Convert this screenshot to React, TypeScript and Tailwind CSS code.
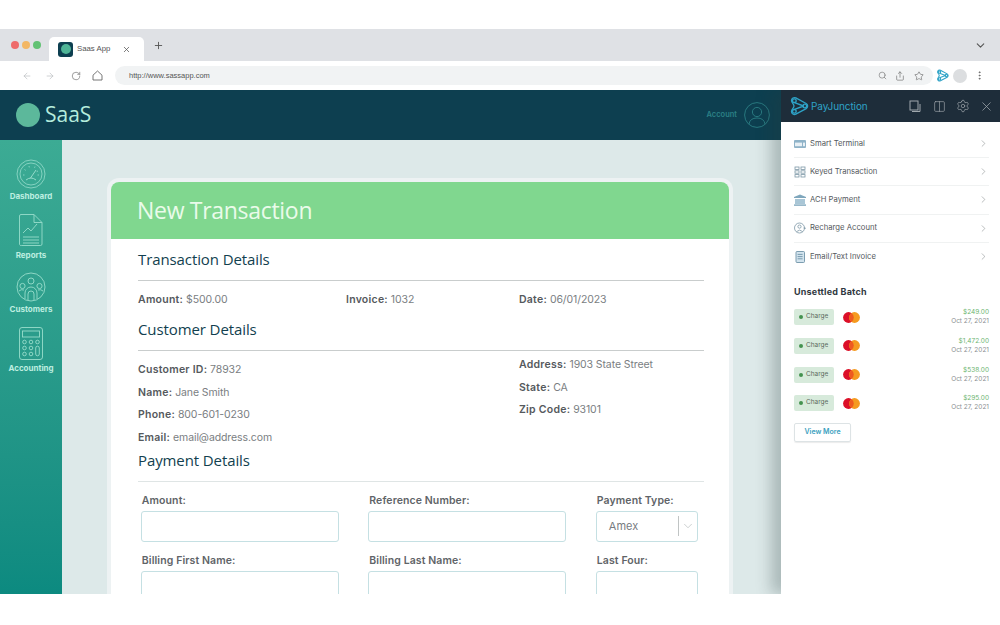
import { ArrowLeft, ArrowRight, RotateCw, Search, Share, Star, EllipsisVertical, ChevronDown, ChevronRight, Plus, X, Settings, Columns2 } from "lucide-react";

function PjLogo({ size = 20, color = "#2ea3c7", sw = 2 }: { size?: number; color?: string; sw?: number }) {
  return (
    <svg width={size} height={size} viewBox="0 0 24 24" fill="none" stroke={color} strokeWidth={sw} strokeLinejoin="round">
      <path d="M3 5.5a3.6 3.6 0 0 1 5.2-3.2L20.6 9a3.6 3.6 0 0 1 0 6.2L8.2 21.8A3.6 3.6 0 0 1 3 18.5c0-2.4 3-4.2 3-6.5S3 7.9 3 5.5z" />
      <path d="M6.6 8 L17.5 12 L6.6 16" />
      <circle cx="6.4" cy="5.6" r="2.2" />
      <circle cx="6.4" cy="18.4" r="2.2" />
      <circle cx="19" cy="12" r="2.2" />
    </svg>
  );
}

function Mastercard() {
  return (
    <svg width="17" height="11" viewBox="0 0 17 11" className="shrink-0">
      <circle cx="5.5" cy="5.5" r="5.4" fill="#dc0f28" />
      <circle cx="11.5" cy="5.5" r="5.4" fill="#f59a1f" />
      <path d="M8.5 1.1 A5.4 5.4 0 0 1 8.5 9.9 A5.4 5.4 0 0 1 8.5 1.1" fill="#ee5a1f" />
    </svg>
  );
}

const navIconClass = "text-[#97dccb]";

function DashboardIcon() {
  return (
    <svg width="30" height="30" viewBox="0 0 30 30" fill="none" stroke="currentColor" strokeWidth="0.8" className={navIconClass}>
      <circle cx="15" cy="15" r="14" />
      <circle cx="15" cy="15" r="11" />
      <path d="M14.5 19 L20 11 M10 21 Q15 17 20 21" strokeWidth="1" />
      <path d="M7 16h1.5M8.5 10.5l1.2.8M13 7l.3 1.4M19 7.5l-.5 1.3M22 12l-1.3.6M23 16h-1.5" />
    </svg>
  );
}

function ReportsIcon() {
  return (
    <svg width="24" height="32" viewBox="0 0 24 32" fill="none" stroke="currentColor" strokeWidth="0.9" className={navIconClass}>
      <path d="M2 .5h13l8 8V30a1.5 1.5 0 0 1-1.5 1.5h-19A1.5 1.5 0 0 1 .5 30V2A1.5 1.5 0 0 1 2 .5z" />
      <path d="M15 .5V8.5h8" />
      <path d="M4 19l5-5 3 3 6-7M4 23h16M4 26h16M4 29h16" />
    </svg>
  );
}

function CustomersIcon() {
  return (
    <svg width="30" height="30" viewBox="0 0 30 30" fill="none" stroke="currentColor" strokeWidth="0.9" className={navIconClass}>
      <circle cx="15" cy="15" r="14" />
      <circle cx="15" cy="9" r="3" />
      <circle cx="6.5" cy="14" r="2.6" />
      <circle cx="23.5" cy="14" r="2.6" />
      <path d="M9 27v-6a6 6 0 0 1 12 0v6M12 28v-6a3 3 0 0 1 6 0v6M3 19q2-2 5-1M27 19q-2-2-5-1" />
    </svg>
  );
}

function AccountingIcon() {
  return (
    <svg width="24" height="33" viewBox="0 0 24 33" fill="none" stroke="currentColor" strokeWidth="0.9" className={navIconClass}>
      <rect x=".5" y=".5" width="23" height="32" rx="2.5" />
      <rect x="3.5" y="4" width="17" height="6" />
      <circle cx="5.5" cy="15" r="1.8" /><circle cx="12" cy="15" r="1.8" /><circle cx="18.5" cy="15" r="1.8" />
      <circle cx="5.5" cy="21" r="1.8" /><circle cx="12" cy="21" r="1.8" />
      <circle cx="5.5" cy="27" r="1.8" /><circle cx="12" cy="27" r="1.8" />
      <rect x="16.7" y="19.2" width="3.6" height="9.6" rx="1.8" />
    </svg>
  );
}

function NavItem({ icon, label, gap, pad }: { icon: React.ReactNode; label: string; gap: string; pad: string }) {
  return (
    <div className={`flex flex-col items-center ${pad}`}>
      {icon}
      <span className={`${gap} text-[8px] leading-[10px] font-bold text-[#bdeee0] font-['Inter',sans-serif]`}>{label}</span>
    </div>
  );
}

function Field({ label, children }: { label: string; children?: React.ReactNode }) {
  return (
    <div className="w-full flex flex-col">
      <span className="pl-[1px] text-[10.5px] leading-[13px] font-semibold tracking-[0.1px] text-[#5f6468]">{label}</span>
      <div className="mt-[4px] h-[31px] rounded-[3px] border border-[#c5e0e3] bg-white flex items-center shrink-0">{children}</div>
    </div>
  );
}

function Info({ k, v }: { k: string; v: string }) {
  return (
    <div className="text-[10.5px] leading-[14px] tracking-[-0.1px] text-[#7a7e82]">
      <span className="font-semibold tracking-[0.25px] text-[#55595d]">{k}</span> {v}
    </div>
  );
}

function Section({ title }: { title: string }) {
  return (
    <h2 className="text-[15px] leading-[22px] tracking-[-0.1px] text-[#123f4f] font-['Open_Sans',sans-serif]">{title}</h2>
  );
}

const menu = [
  {
    label: "Smart Terminal",
    icon: (
      <svg width="12" height="12" viewBox="0 0 12 12"><rect y="2" width="12" height="8" rx="1" fill="#8fb3c8" /><rect x="1" y="4.6" width="7" height="3.6" fill="#e8f0f5" /><rect x="9" y="4.6" width="2" height="3.6" fill="#e8f0f5" /></svg>
    ),
  },
  {
    label: "Keyed Transaction",
    icon: (
      <svg width="12" height="12" viewBox="0 0 12 12" fill="none" stroke="#7c97a6" strokeWidth="0.8"><rect x="1" y="1" width="4" height="2.4" /><rect x="1" y="4.8" width="4" height="2.4" /><rect x="1" y="8.6" width="4" height="2.4" /><rect x="7" y="1" width="4" height="2.4" /><rect x="7" y="4.8" width="4" height="2.4" /><rect x="7" y="8.6" width="4" height="2.4" /></svg>
    ),
  },
  {
    label: "ACH Payment",
    icon: (
      <svg width="12" height="12" viewBox="0 0 12 12"><path d="M6 .5 12 3v1H0V3z" fill="#7fa7bd" /><rect x="1" y="5" width="10" height="5" fill="#a9c6d6" /><rect y="10.4" width="12" height="1.4" fill="#7fa7bd" /></svg>
    ),
  },
  {
    label: "Recharge Account",
    icon: (
      <svg width="12" height="12" viewBox="0 0 12 12" fill="none" stroke="#7c97a6" strokeWidth="0.8"><circle cx="5.5" cy="6" r="5" /><circle cx="5.5" cy="4.6" r="1.6" /><path d="M2.6 9.6q3-3 6 0M9.5 6l2 0-1 1" /></svg>
    ),
  },
  {
    label: "Email/Text Invoice",
    icon: (
      <svg width="12" height="12" viewBox="0 0 12 12" fill="none" stroke="#6f93a8" strokeWidth="0.9"><rect x="2" y=".5" width="8.5" height="11" rx="1" fill="#d3e4ee" /><path d="M3.6 3.4h5M3.6 5.6h5M3.6 7.8h5" /></svg>
    ),
  },
];

const batch = ["$249.00", "$1,472.00", "$538.00", "$295.00"];

export default function App() {
  return (
    <div className="w-[1000px] h-[625px] bg-white overflow-hidden flex flex-col font-['Inter','Liberation_Sans',sans-serif]">
      <div className="h-[29px] shrink-0" />

      {/* Tab strip */}
      <div className="h-[32px] shrink-0 bg-[#dfe1e5] flex items-end pl-[11px] pr-[13px]">
        <div className="h-[32px] w-[38px] flex items-center gap-[3px]">
          <span className="w-[8px] h-[8px] rounded-full bg-[#ee6b6b]" />
          <span className="w-[8px] h-[8px] rounded-full bg-[#f3b765]" />
          <span className="w-[8px] h-[8px] rounded-full bg-[#62c274]" />
        </div>
        <div className="w-[95px] h-[24px] bg-white rounded-t-[5px] flex items-center pl-[9px] pr-[13px]">
          <div className="w-[15px] h-[15px] rounded-[3px] bg-[#0d3f50] flex items-center justify-center">
            <span className="w-[10px] h-[10px] rounded-full bg-[#4fb597]" />
          </div>
          <span className="ml-[4px] text-[7.8px] text-[#555] font-['Liberation_Sans',sans-serif]">Saas App</span>
          <X size={9} className="ml-auto text-[#555]" />
        </div>
        <div className="h-[32px] ml-[9px] flex items-center">
          <Plus size={11} className="text-[#555]" />
        </div>
        <div className="h-[32px] ml-auto flex items-center">
          <ChevronDown size={13} className="text-[#555]" />
        </div>
      </div>

      {/* Toolbar */}
      <div className="h-[29px] shrink-0 bg-white flex items-center pl-[22px] pr-[14px]">
        <ArrowLeft size={10} strokeWidth={1.5} className="text-[#b5b8bb]" />
        <ArrowRight size={10} strokeWidth={1.5} className="ml-[13px] text-[#b5b8bb]" />
        <RotateCw size={10} strokeWidth={1.5} className="ml-[16px] text-[#666]" />
        <svg width="11" height="11" viewBox="0 0 11 11" fill="none" stroke="#666" strokeWidth="0.9" strokeLinejoin="round" className="ml-[11px]">
          <path d="M1 5.2 5.5 1 10 5.2V10H1z" />
        </svg>
        <div className="ml-[12px] w-[818px] h-[19px] rounded-full bg-[#f1f3f4] flex items-center pl-[14px] pr-[9px]">
          <span className="text-[7.5px] text-[#555] font-['Liberation_Sans',sans-serif]">http://www.sassapp.com</span>
          <Search size={9} strokeWidth={1.5} className="ml-auto text-[#666]" />
          <Share size={10} strokeWidth={1.5} className="ml-[8px] text-[#666]" />
          <Star size={10} strokeWidth={1.5} className="ml-[9px] text-[#666]" />
        </div>
        <div className="ml-[3px]"><PjLogo size={13} color="#2ea3c7" /></div>
        <span className="ml-[4px] w-[14px] h-[14px] rounded-full bg-[#dcdee0]" />
        <EllipsisVertical size={11} className="ml-[7px] text-[#666]" />
      </div>

      {/* App */}
      <div className="h-[504px] shrink-0 flex overflow-hidden">
        <div className="w-[781px] flex flex-col">
          <header className="h-[50px] shrink-0 bg-[#0d3f50] flex items-center pl-[16px] pr-[11px]">
            <span className="w-[24px] h-[24px] rounded-full bg-[#5cb89b]" />
            <span className="ml-[5px] text-[21px] text-[#b5ecdd] font-['Open_Sans',sans-serif]">SaaS</span>
            <span className="ml-auto text-[7.5px] font-semibold text-[#2b7f85]">Account</span>
            <svg width="26" height="26" viewBox="0 0 26 26" fill="none" stroke="#2b7f85" strokeWidth="0.9" className="ml-[7px]">
              <circle cx="13" cy="13" r="12.4" />
              <circle cx="13" cy="10" r="4.6" />
              <path d="M5 22q1-6 8-6t8 6" />
            </svg>
          </header>
          <div className="flex-1 flex min-h-0">
            <aside className="w-[62px] shrink-0 bg-gradient-to-b from-[#3cab94] to-[#0c8a80] flex flex-col">
              <NavItem icon={<DashboardIcon />} label="Dashboard" gap="mt-[2px]" pad="pt-[19px]" />
              <NavItem icon={<ReportsIcon />} label="Reports" gap="mt-[4px]" pad="pt-[13px]" />
              <NavItem icon={<CustomersIcon />} label="Customers" gap="mt-[2px]" pad="pt-[12px]" />
              <NavItem icon={<AccountingIcon />} label="Accounting" gap="mt-[3px]" pad="pt-[13px]" />
            </aside>
            <main className="flex-1 min-w-0 bg-[#dde9e9] pt-[42px] pl-[49px] overflow-hidden">
              <div className="w-[618px] rounded-t-[8px] bg-white ring-[4px] ring-[#edf2f3] overflow-hidden h-[420px]">
                <div className="h-[57px] bg-[#80d78f] flex items-center pl-[26px]">
                  <h1 className="text-[23px] tracking-[-0.3px] text-[#eafbea] font-['Open_Sans',sans-serif]">New Transaction</h1>
                </div>
                <div className="pl-[27px] pr-[25px] pt-[9px]">
                  <Section title="Transaction Details" />
                  <div className="mt-[10px] border-t border-[#c9cdcd]" />
                  <div className="mt-[12px] grid grid-cols-[208px_173px_1fr]">
                    <Info k="Amount:" v="$500.00" />
                    <Info k="Invoice:" v="1032" />
                    <Info k="Date:" v="06/01/2023" />
                  </div>
                  <div className="mt-[11px]"><Section title="Customer Details" /></div>
                  <div className="mt-[10px] border-t border-[#c9cdcd]" />
                  <div className="mt-[7px] grid grid-cols-[381px_1fr]">
                    <div className="pt-[5px] flex flex-col gap-[8.6px]">
                      <Info k="Customer ID:" v="78932" />
                      <Info k="Name:" v="Jane Smith" />
                      <Info k="Phone:" v="800-601-0230" />
                      <Info k="Email:" v="email@address.com" />
                    </div>
                    <div className="flex flex-col gap-[8.5px]">
                      <Info k="Address:" v="1903 State Street" />
                      <Info k="State:" v="CA" />
                      <Info k="Zip Code:" v="93101" />
                    </div>
                  </div>
                  <div className="mt-[4px]"><Section title="Payment Details" /></div>
                  <div className="mt-[10px] border-t border-[#dfe5e5]" />
                  <div className="mt-[12px] pl-[2.8px] grid grid-cols-[198px_198px_102px] gap-x-[29.5px] gap-y-[12px]">
                    <Field label="Amount:" />
                    <Field label="Reference Number:" />
                    <Field label="Payment Type:">
                      <span className="pl-[12px] text-[11px] text-[#777b7f]">Amex</span>
                      <span className="ml-auto h-[20px] border-l border-[#c0c4c4]" />
                      <ChevronDown size={14} strokeWidth={1} className="mx-[2px] text-[#a9b0b0]" />
                    </Field>
                    <Field label="Billing First Name:" />
                    <Field label="Billing Last Name:" />
                    <Field label="Last Four:" />
                  </div>
                </div>
              </div>
            </main>
          </div>
        </div>

        {/* Extension panel */}
        <aside className="w-[219px] shrink-0 bg-white flex flex-col shadow-[-10px_0_14px_rgba(40,60,60,0.28)] z-10">
          <div className="h-[32px] shrink-0 bg-[#1e2d3a] flex items-center pl-[8px] pr-[6px]">
            <PjLogo size={20} color="#2ea3c7" sw={1.6} />
            <span className="ml-[2px] text-[10px] tracking-[-0.1px] text-[#2ea3c7]">PayJunction</span>
            <svg width="12" height="12" viewBox="0 0 12 12" fill="none" stroke="#a0a8ad" strokeWidth="1" className="ml-auto">
              <rect x="1" y="1" width="8" height="9" />
              <path d="M3 11.5h8V4" />
            </svg>
            <Columns2 size={13} strokeWidth={1.2} className="ml-[12px] text-[#a0a8ad]" />
            <Settings size={14} strokeWidth={1.2} className="ml-[10px] text-[#a0a8ad]" />
            <X size={15} strokeWidth={1.2} className="ml-[9px] text-[#a0a8ad]" />
          </div>
          <div className="pt-[8px] pl-[13px] pr-[11px] flex flex-col">
            {menu.map((m, i) => (
              <div key={m.label} className={`h-[28.2px] flex items-center ${i < 4 ? "border-b border-[#f0f2f2]" : ""}`}>
                {m.icon}
                <span className="ml-[4px] text-[7.7px] text-[#54585c]">{m.label}</span>
                <ChevronRight size={11} strokeWidth={1.3} className="ml-auto text-[#8b8f92]" />
              </div>
            ))}
          </div>
          <div className="mt-[15px] pl-[13px] pr-[11px]">
            <h3 className="text-[9px] leading-[12px] font-bold tracking-[0.2px] text-[#30383f]">Unsettled Batch</h3>
            <div className="mt-[5px] flex flex-col">
              {batch.map((amount) => (
                <div key={amount} className="h-[28.7px] flex items-center">
                  <div className="w-[40px] h-[16px] rounded-[2px] bg-[#d7eadb] flex items-center pl-[5px]">
                    <span className="w-[4px] h-[4px] rounded-full bg-[#44924f]" />
                    <span className="ml-[3px] text-[6.5px] text-[#5d6b60]">Charge</span>
                  </div>
                  <div className="ml-[9px]"><Mastercard /></div>
                  <div className="ml-auto text-right">
                    <div className="text-[6.5px] leading-[9px] text-[#6cb56f]">{amount}</div>
                    <div className="text-[6.5px] leading-[9px] text-[#8b8f92]">Oct 27, 2021</div>
                  </div>
                </div>
              ))}
            </div>
            <div className="mt-[5px] w-[57px] h-[19px] rounded-[2px] border border-[#dde3e5] shadow-[0_1px_1px_rgba(0,0,0,0.08)] flex items-center justify-center text-[7px] font-semibold text-[#3a9fc0]">View More</div>
          </div>
        </aside>
      </div>
    </div>
  );
}
